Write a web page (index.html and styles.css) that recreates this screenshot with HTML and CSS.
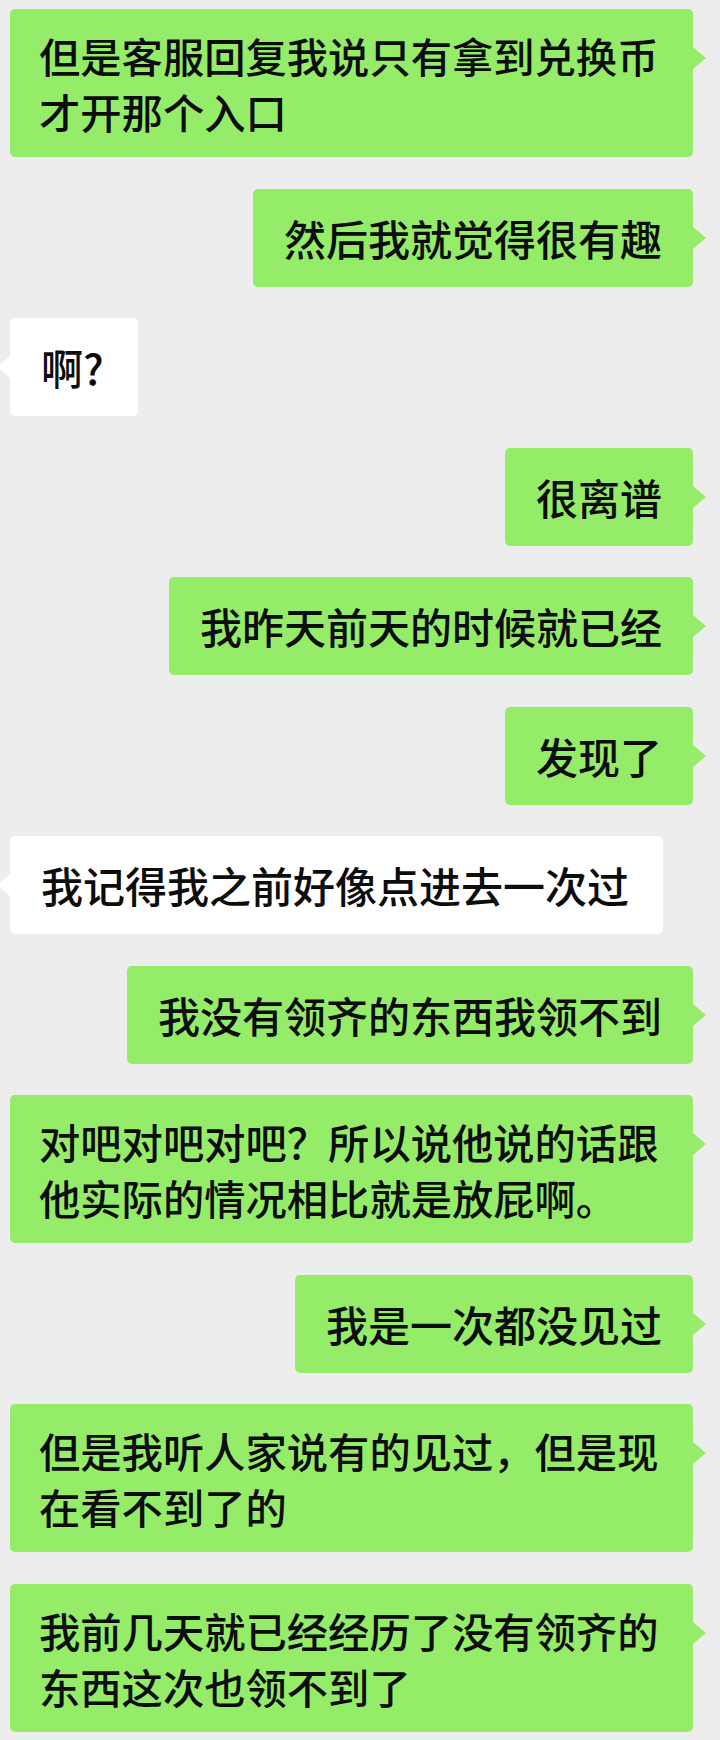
FILE: index.html
```html
<!DOCTYPE html>
<html lang="zh-CN">
<head>
<meta charset="utf-8">
<title>聊天记录</title>
<link rel="stylesheet" href="styles.css">
</head>
<body>
<div class="chat">
  <div class="msg me"><div class="bubble multi">但是客服回复我说只有拿到兑换币才开那个入口</div></div>
  <div class="msg me"><div class="bubble">然后我就觉得很有趣</div></div>
  <div class="msg them"><div class="bubble">啊?</div></div>
  <div class="msg me"><div class="bubble">很离谱</div></div>
  <div class="msg me"><div class="bubble">我昨天前天的时候就已经</div></div>
  <div class="msg me"><div class="bubble">发现了</div></div>
  <div class="msg them"><div class="bubble">我记得我之前好像点进去一次过</div></div>
  <div class="msg me"><div class="bubble">我没有领齐的东西我领不到</div></div>
  <div class="msg me"><div class="bubble multi">对吧对吧对吧？所以说他说的话跟他实际的情况相比就是放屁啊。</div></div>
  <div class="msg me"><div class="bubble">我是一次都没见过</div></div>
  <div class="msg me"><div class="bubble multi">但是我听人家说有的见过，但是现在看不到了的</div></div>
  <div class="msg me"><div class="bubble multi">我前几天就已经经历了没有领齐的东西这次也领不到了</div></div>
</div>
</body>
</html>
```

FILE: styles.css
```css
html, body {
  margin: 0;
  padding: 0;
  background: #ededed;
}

body {
  font-family: "Noto Sans CJK SC", "Noto Sans", sans-serif;
  font-weight: 500;
  color: #0d0d0d;
}

.chat {
  display: flex;
  flex-direction: column;
  gap: 31.5px;
  padding: 9px 27px 0 10px;
}

.msg {
  display: flex;
}

.msg.me {
  justify-content: flex-end;
}

.msg.them {
  justify-content: flex-start;
}

.bubble {
  position: relative;
  box-sizing: border-box;
  min-height: 98px;
  display: flex;
  align-items: center;
  padding: 18px 31px;
  font-size: 42px;
  line-height: 56px;
  border-radius: 5px;
  word-break: break-all;
}

.bubble.multi {
  font-size: 41.3px;
  padding-left: 29px;
}

.me .bubble {
  background: #95ec69;
}

.them .bubble {
  background: #ffffff;
  padding-right: 34px;
}

.bubble::after {
  content: "";
  position: absolute;
  top: 38px;
  width: 0;
  height: 0;
  border-top: 11px solid transparent;
  border-bottom: 11px solid transparent;
}

.me .bubble::after {
  left: 100%;
  border-left: 13px solid #95ec69;
}

.them .bubble::after {
  right: 100%;
  border-right: 13px solid #ffffff;
}
```
